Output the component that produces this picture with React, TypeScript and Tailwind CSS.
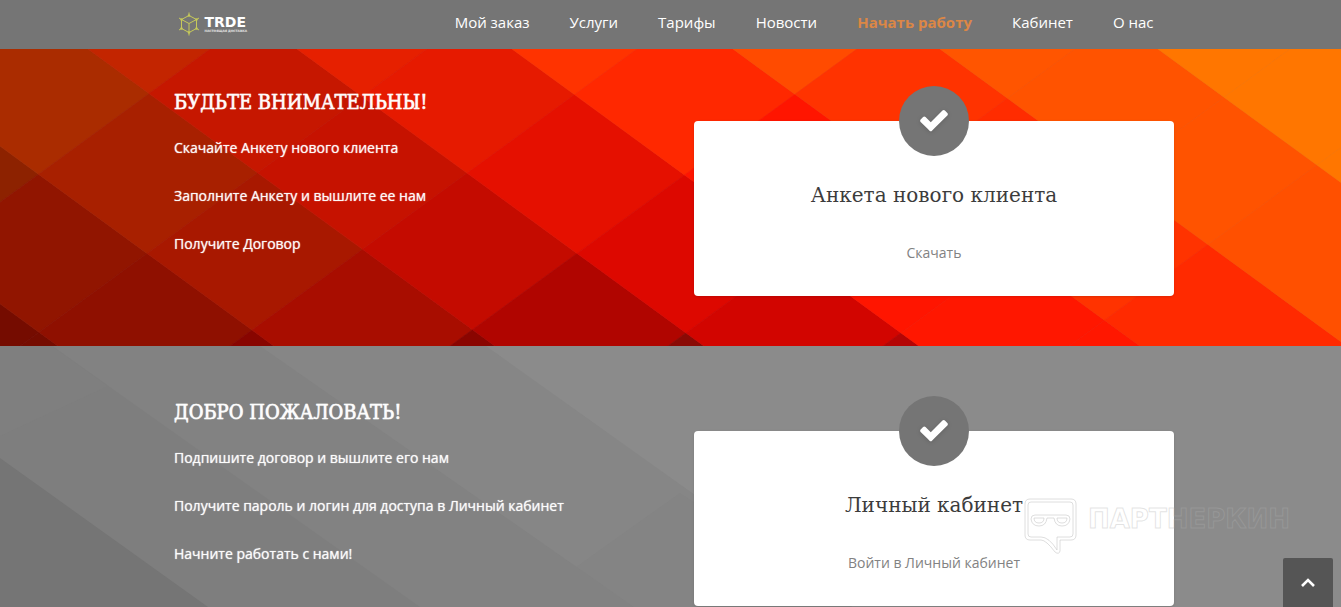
import {FC, ReactNode} from "react";
import {clsx} from "clsx";

const menu = [
  {label: 'Мой заказ', href: '#order'},
  {label: 'Услуги', href: '#services'},
  {label: 'Тарифы', href: '#prices'},
  {label: 'Новости', href: '#news'},
  {label: 'Начать работу', href: '#start', active: true},
  {label: 'Кабинет', href: '#account'},
  {label: 'О нас', href: '#about'},
];

// The mosaic is a lattice: falling and rising lines, each given by its x on the top edge.
const SLOPE = 1.37;
const falling = [-900, -349, -133, 88, 297, 512, 733, 940, 1158, 1900];
const rising = [-1000, 210, 427, 637, 857, 1075, 1290, 1476, 2600];
const redCells = [
  ['#750c00', '#750c00', '#750c00', '#750c00', '#750c00', '#750c00', '#750c00', '#750c00'],
  ['#8d2200', '#911500', '#8f1000', '#880500', '#880500', '#880500', '#880500', '#880500'],
  ['#aa2c00', '#a82000', '#a81800', '#a80d00', '#8a0500', '#8a0500', '#8a0500', '#8a0500'],
  ['#c32500', '#c61700', '#c61200', '#c40b00', '#b00500', '#8a0a05', '#8a0a05', '#8a0a05'],
  ['#e62000', '#e62000', '#e61a00', '#e51000', '#dd0800', '#d20500', '#b40505', '#b40505'],
  ['#ff3300', '#ff3300', '#ff3300', '#ff2800', '#ff1500', '#ff1500', '#ff1700', '#ff1700'],
  ['#ff4b00', '#ff4b00', '#ff4b00', '#ff4b00', '#ff3300', '#ff2c00', '#ff3300', '#ff2a00'],
  ['#ff5500', '#ff5500', '#ff5500', '#ff5500', '#ff5500', '#ff5300', '#ff5300', '#ff5000'],
  ['#ff7600', '#ff7600', '#ff7600', '#ff7600', '#ff7600', '#ff7600', '#ff7600', '#ff7600'],
];

const cross = (down: number, up: number) => `${(down + up) / 2},${(up - down) / (2 * SLOPE)}`;

const RedMosaic: FC = () => (
  <svg className="absolute inset-0 size-full" viewBox="0 0 1341 297" preserveAspectRatio="xMidYMid slice" aria-hidden="true">
    {redCells.map((row, i) => row.map((color, j) => (
      <polygon
        key={`${i}-${j}`}
        fill={color}
        stroke={color}
        strokeWidth="0.6"
        points={[
          cross(falling[i], rising[j]),
          cross(falling[i + 1], rising[j]),
          cross(falling[i + 1], rising[j + 1]),
          cross(falling[i], rising[j + 1]),
        ].join(' ')}
      />
    )))}
  </svg>
);

const GrayMosaic: FC = () => (
  <svg className="absolute inset-0 size-full" viewBox="0 0 1341 261" preserveAspectRatio="xMidYMid slice" aria-hidden="true">
    <rect width="1341" height="261" fill="#8b8b8b" />
    <path d="M486 0L852 261H0V0Z" fill="#868686" />
    <path d="M520 261L680 147L852 261Z" fill="#848484" />
    <path d="M260 0L634 261H0V0Z" fill="#828282" />
    <path d="M52 0L420 261H0V0Z" fill="#7e7e7e" />
    <path d="M0 0H52L108 40L0 90Z" fill="#7f7f7f" />
    <path d="M0 112L208 261H0Z" fill="#757575" />
  </svg>
);

const Logo: FC = () => (
  <a href="#top" className="flex items-center gap-[5px] text-white">
    <svg width="22" height="24" viewBox="0 0 22 24" fill="none" stroke="#c6c95a" strokeWidth="1" aria-hidden="true">
      <path d="M11 3.5L18.5 7.5V16.5L11 20.5L3.5 16.5V7.5Z" />
      <path d="M3.5 7.5L11 11.5L18.5 7.5M11 11.5V20.5" />
      <path d="M11 0.5V3.5M11 20.5V23.5M1 6L3.5 7.5M21 6L18.5 7.5M1 18L3.5 16.5M21 18L18.5 16.5" />
      <g fill="#c6c95a" stroke="none">
        <circle cx="11" cy="3.5" r="1.2" />
        <circle cx="3.5" cy="7.5" r="1.2" />
        <circle cx="18.5" cy="7.5" r="1.2" />
        <circle cx="3.5" cy="16.5" r="1.2" />
        <circle cx="18.5" cy="16.5" r="1.2" />
        <circle cx="11" cy="20.5" r="1.2" />
      </g>
    </svg>
    <span className="flex flex-col font-['DejaVu_Sans',sans-serif] font-bold">
      <span className="text-[14px] leading-[14px]">TRDE</span>
      <span className="text-[3px] leading-[4px] text-white/80">НАСТОЯЩАЯ ДОСТАВКА</span>
    </span>
  </a>
);

const Header: FC = () => (
  <header className="sticky top-0 z-20 bg-[#757575] pl-[6px]">
    <div className="mx-auto flex h-[49px] max-w-[1000px] items-center justify-between pr-5 pb-1.5 pl-1">
      <div className="pt-1">
        <Logo />
      </div>
      <nav className="flex gap-10 text-[15px] leading-6 text-white">
        {menu.map((item) => (
          <a key={item.href} href={item.href} className={clsx(item.active && "font-bold text-[#dc8746]")}>
            {item.label}
          </a>
        ))}
      </nav>
    </div>
  </header>
);

const CheckIcon: FC = () => (
  <svg width="32" height="32" viewBox="0 50 1792 1792" fill="currentColor" className="drop-shadow-sm" aria-hidden="true">
    <path d="M1671 566q0 40-28 68l-724 724-136 136q-28 28-68 28t-68-28l-136-136-362-362q-28-28-28-68t28-68l136-136q28-28 68-28t68 28l294 295 656-657q28-28 68-28t68 28l136 136q28 28 28 68z" />
  </svg>
);

const Card: FC<{title: string, link: string, href: string}> = ({title, link, href}) => (
  <div className="relative flex h-[175px] flex-col items-center rounded-sm bg-white pt-[58px] shadow-sm">
    <div className="absolute -top-[35px] flex size-[70px] items-center justify-center rounded-full bg-[#757575] text-white">
      <CheckIcon />
    </div>
    <h3 className="font-['Roboto_Slab','DejaVu_Serif',serif] text-[20px] leading-8 text-[#3c3c3c]">{title}</h3>
    <a href={href} className="mt-[30px] text-[14px] leading-6 text-[#828282]">{link}</a>
  </div>
);

const Step: FC<{title: string, lines: string[], className: string, background: ReactNode, children: ReactNode}> = (props) => {
  const {title, lines, className, background, children} = props;
  return (
    <section className={clsx("relative overflow-hidden pl-[7px]", className)}>
      {background}
      <div className="relative mx-auto grid max-w-[1000px] grid-cols-2 gap-10 text-white/90">
        <div className="pt-px [text-shadow:0_0_1px_rgb(255_255_255/0.9)]">
          <h2 className="mb-[18px] font-['Roboto_Slab','DejaVu_Serif_Condensed','DejaVu_Serif',serif] text-[20px] leading-8 font-medium [-webkit-text-stroke:0.4px]">{title}</h2>
          <div className="flex flex-col gap-6 text-[14px] leading-6 font-medium">
            {lines.map((line) => <p key={line}>{line}</p>)}
          </div>
        </div>
        <div className="pt-9">{children}</div>
      </div>
    </section>
  );
};

const Watermark: FC = () => (
  <div className="pointer-events-none absolute top-[498px] right-[51px] z-10 flex gap-2.5">
    <svg width="54" height="58" viewBox="0 0 54 58" fill="none" aria-hidden="true">
      <g stroke="#c8c8c8" strokeOpacity="0.6">
        <path d="M6 1H47Q52 1 52 6V37Q52 42 47 42H36V53Q35 57 31 54Q22 42 17 42H6Q1 42 1 37V6Q1 1 6 1Z" />
        <path d="M7 4H46Q49 4 49 7V36Q49 39 46 39H33V52Q25 39 17 39H7Q4 39 4 36V7Q4 4 7 4Z" />
        <path d="M11 17H42Q46 17 46 21Q45 28 38 28Q31 28 30 20H23Q22 28 15 28Q8 28 7 21Q7 17 11 17Z" />
        <path d="M10 20H20Q20 25 15 25Q10 25 10 20ZM33 20H43Q43 25 38 25Q33 25 33 20Z" />
      </g>
    </svg>
    <span className="pt-[5px] font-['DejaVu_Sans',sans-serif] text-[26px] leading-8 font-bold text-transparent [-webkit-text-stroke:1px_rgb(175_175_175/0.35)]">ПАРТНЕРКИН</span>
  </div>
);

export default function App() {
  return (
    <div id="top" className="relative flex min-h-screen flex-col bg-[#8b8b8b] font-['Open_Sans','Noto_Sans',sans-serif]">
      <Header />
      <Step
        title="БУДЬТЕ ВНИМАТЕЛЬНЫ!"
        lines={['Скачайте Анкету нового клиента', 'Заполните Анкету и вышлите ее нам', 'Получите Договор']}
        className="pt-9 pb-[50px]"
        background={<RedMosaic />}
      >
        <Card title="Анкета нового клиента" link="Скачать" href="#download" />
      </Step>
      <Step
        title="ДОБРО ПОЖАЛОВАТЬ!"
        lines={['Подпишите договор и вышлите его нам', 'Получите пароль и логин для доступа в Личный кабинет', 'Начните работать с нами!']}
        className="flex-1 pt-[49px] pb-px"
        background={<GrayMosaic />}
      >
        <Card title="Личный кабинет" link="Войти в Личный кабинет" href="#login" />
      </Step>
      <Watermark />
      <button
        type="button"
        aria-label="Наверх"
        onClick={() => window.scrollTo({top: 0, behavior: 'smooth'})}
        className="fixed right-2 bottom-0 z-20 flex h-[49px] w-[50px] items-center justify-center rounded-t-xs bg-[#555555] text-white"
      >
        <svg width="14" height="9" viewBox="0 0 14 9" fill="none" stroke="currentColor" strokeWidth="2.6" aria-hidden="true">
          <path d="M1 8L7 2L13 8" />
        </svg>
      </button>
    </div>
  );
}
